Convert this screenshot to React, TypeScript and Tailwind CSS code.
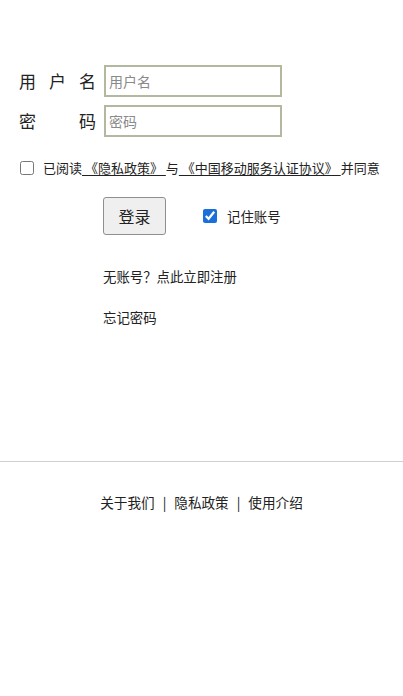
import { useState } from "react";

const FONT = { fontFamily: '"Microsoft YaHei", "Noto Sans CJK SC", "Noto Sans", sans-serif' };

export default function App() {
  const [agree, setAgree] = useState(false);
  const [remember, setRemember] = useState(true);

  return (
    <div className="w-[403px] h-[696px] bg-white text-[#222]" style={FONT}>
      <div className="pt-[65px]">
        <div className="flex items-center pl-[19px]">
          <label className="w-[77px] text-[17px] leading-[32px] [text-align-last:justify]">用户名</label>
          <input
            placeholder="用户名"
            className="ml-[8px] w-[178px] h-[32px] border-2 border-[#b3b99f] px-[3px] text-[14px] placeholder:text-[#8a8a8a] outline-none"
          />
        </div>
        <div className="flex items-center pl-[19px] mt-[8px]">
          <label className="w-[77px] text-[17px] leading-[32px] [text-align-last:justify]">密码</label>
          <input
            type="password"
            placeholder="密码"
            className="ml-[8px] w-[178px] h-[32px] border-2 border-[#b3b99f] px-[3px] text-[14px] placeholder:text-[#8a8a8a] outline-none"
          />
        </div>

        <div className="flex items-center mt-[21px] pl-[20px] h-[20px] text-[13px]">
          <input
            type="checkbox"
            checked={agree}
            onChange={(e) => setAgree(e.target.checked)}
            className="w-[14px] h-[14px] m-0"
          />
          <span className="ml-[9px] whitespace-nowrap">
            已阅读
            <a className="underline underline-offset-2"> 《隐私政策》 </a>
            与
            <a className="underline underline-offset-2"> 《中国移动服务认证协议》 </a>
            并同意
          </span>
        </div>

        <div className="flex items-center mt-[19px] pl-[103px]">
          <button className="w-[63px] h-[38px] bg-[#efefef] border border-[#8f8f8f] rounded-[3px] text-[16px]">
            登录
          </button>
          <input
            type="checkbox"
            checked={remember}
            onChange={(e) => setRemember(e.target.checked)}
            className="ml-[37px] w-[14px] h-[14px] m-0 accent-[#1a6fd8]"
          />
          <span className="ml-[10px] text-[13.4px]">记住账号</span>
        </div>

        <div className="pl-[103px] mt-[31px] text-[13.4px] leading-[20px]">无账号？点此立即注册</div>
        <div className="pl-[103px] mt-[21px] text-[13.4px] leading-[20px]">忘记密码</div>

        <div className="mt-[134px] border-t border-[#cfcfcf]" />

        <div className="flex justify-center items-center mt-[30px] text-[13.6px] leading-[20px] gap-[8px]">
          <span>关于我们</span>
          <span>|</span>
          <span>隐私政策</span>
          <span>|</span>
          <span>使用介绍</span>
        </div>
      </div>
    </div>
  );
}
